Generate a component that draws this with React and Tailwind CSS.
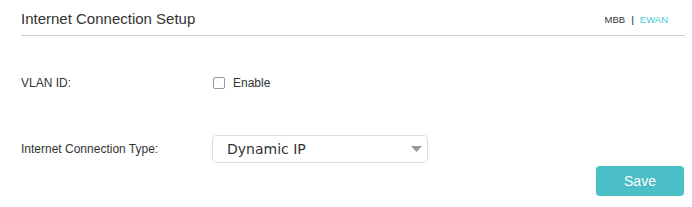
import React from 'react';

const App = () => {
  return (
    <div className="w-[692px] h-[207px] bg-white font-['Liberation_Sans',Arial,sans-serif] text-[#333]">
      <div className="ml-[21px] mr-[7px]">
        {/* Header */}
        <div className="flex items-center justify-between border-b border-[#cccccc] pt-[9px] pb-[6px]">
          <h1 className="text-[15px] leading-[20px] text-[#333]">Internet Connection Setup</h1>
          <div className="flex items-center text-[9.5px] leading-[12px] mr-[17px] mt-[2px]">
            <span className="text-[#333]">MBB</span>
            <span className="mx-[6px] text-[#4a6a8a] font-bold">|</span>
            <span className="text-[#4acbd6]">EWAN</span>
          </div>
        </div>

        {/* VLAN */}
        <div className="flex items-center h-[20px] mt-[37px]">
          <div className="w-[192px] text-[12px]">VLAN ID:</div>
          <label className="flex items-center gap-[8px] text-[12px]">
            <span className="w-[12px] h-[12px] border border-[#999] rounded-[2px] bg-white"></span>
            Enable
          </label>
        </div>

        {/* Connection type */}
        <div className="flex items-center mt-[42px]">
          <div className="w-[191px] text-[12px]">Internet Connection Type:</div>
          <div className="w-[216px] h-[28px] border border-[#dddddd] rounded-[4px] flex items-center justify-between pl-[14px] pr-[5px]">
            <span className="font-['DejaVu_Sans',Verdana,sans-serif] text-[14px] text-[#333]">Dynamic IP</span>
            <svg width="11" height="6" viewBox="0 0 11 6">
              <path d="M0 0 L11 0 L5.5 6 Z" fill="#999" />
            </svg>
          </div>
        </div>

        {/* Save */}
        <div className="flex justify-end mt-[3px] mr-[1px]">
          <button className="w-[88px] h-[30px] rounded-[4px] bg-[#4bbec6] text-white text-[14px]">
            Save
          </button>
        </div>
      </div>
    </div>
  );
};

export default App;
